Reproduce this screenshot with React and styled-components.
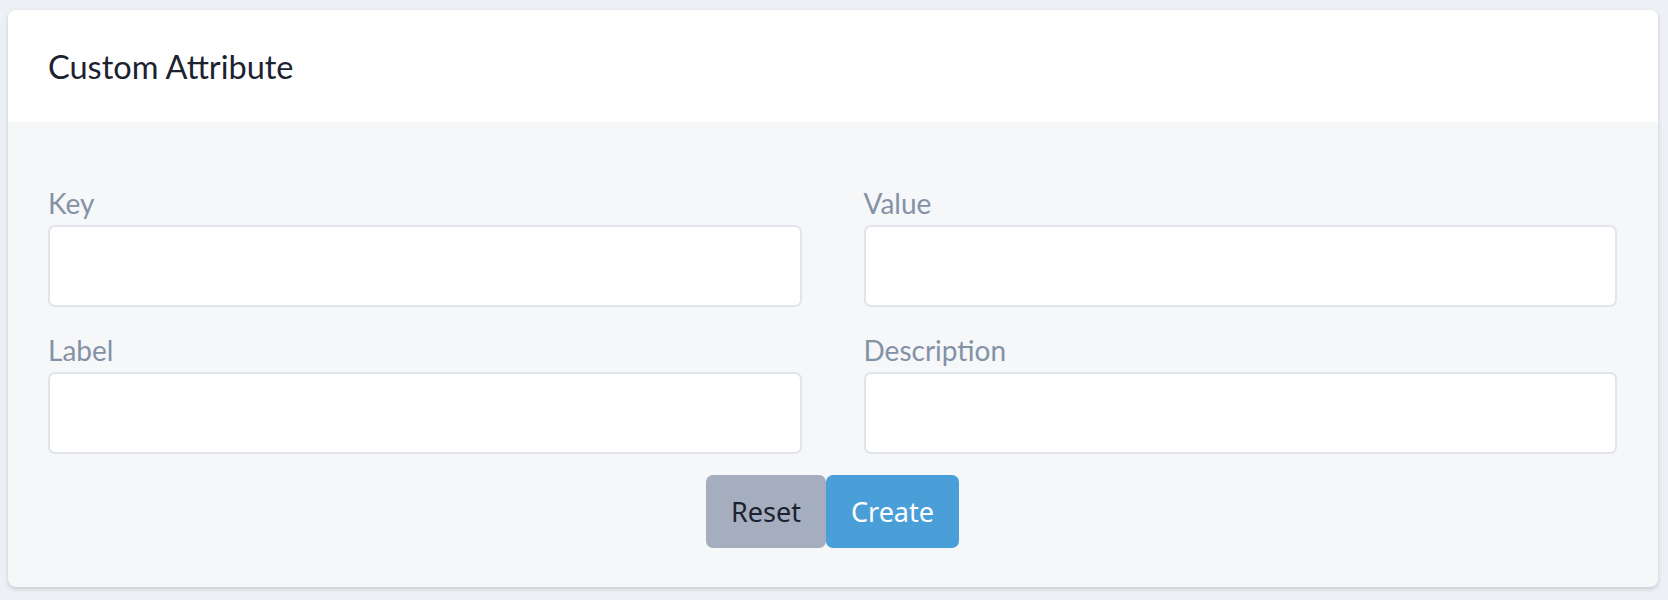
import styled, { createGlobalStyle } from 'styled-components';

const GlobalStyle = createGlobalStyle`
	html, body {
		margin: 0;
		padding: 0;
		background: #edf1f5;
	}

	* {
		box-sizing: border-box;
	}
`;

const Page = styled.div`
	padding: 10px 10px 14px 8px;
	font-family: Lato, "Open Sans", sans-serif;
`;

const Card = styled.section`
	background: #f6f7f9;
	border-radius: 8px;
	box-shadow: 0 2px 4px rgba(30, 40, 60, .18);
	overflow: hidden;
`;

const Header = styled.header`
	display: flex;
	align-items: center;
	height: 112px;
	padding: 0 40px;
	background: #fff;
`;

const Title = styled.h2`
	margin: 0;
	font-size: 32.5px;
	font-weight: 400;
	color: #1c2230;
`;

const Body = styled.div`
	padding: 62px 41px 39px 40px;
`;

const FieldGrid = styled.div`
	display: grid;
	grid-template-columns: 1fr 1fr;
	column-gap: 62px;
	row-gap: 24px;
`;

const Field = styled.label`
	display: flex;
	flex-direction: column;
	gap: 2px;
`;

const FieldLabel = styled.span`
	font-size: 28px;
	line-height: 39px;
	color: #8492a6;
`;

const Input = styled.input`
	height: 82px;
	padding: 0 20px;
	background: #fff;
	border: 2px solid #e1e5eb;
	border-radius: 7px;
	font: inherit;
	font-size: 24px;
	outline: none;
`;

const Actions = styled.div`
	display: flex;
	justify-content: center;
	margin-top: 21px;
`;

const Button = styled.button`
	height: 73px;
	padding: 0 25px;
	border: none;
	border-radius: 7px;
	font-family: "Noto Sans", "Open Sans", sans-serif;
	font-size: 27px;
	cursor: pointer;
	background: ${p => (p.$primary ? '#4a9fd8' : '#a4aebe')};
	color: ${p => (p.$primary ? '#fff' : '#1c2230')};
`;

const fields = ['Key', 'Value', 'Label', 'Description'];

const App = () => {
	return (
		<>
			<GlobalStyle />
			<Page>
				<Card>
					<Header>
						<Title>Custom Attribute</Title>
					</Header>
					<Body>
						<FieldGrid>
							{fields.map(name => (
								<Field key={name}>
									<FieldLabel>{name}</FieldLabel>
									<Input type="text" />
								</Field>
							))}
						</FieldGrid>
						<Actions>
							<Button type="button">Reset</Button>
							<Button type="button" $primary>Create</Button>
						</Actions>
					</Body>
				</Card>
			</Page>
		</>
	);
};

export default App;
